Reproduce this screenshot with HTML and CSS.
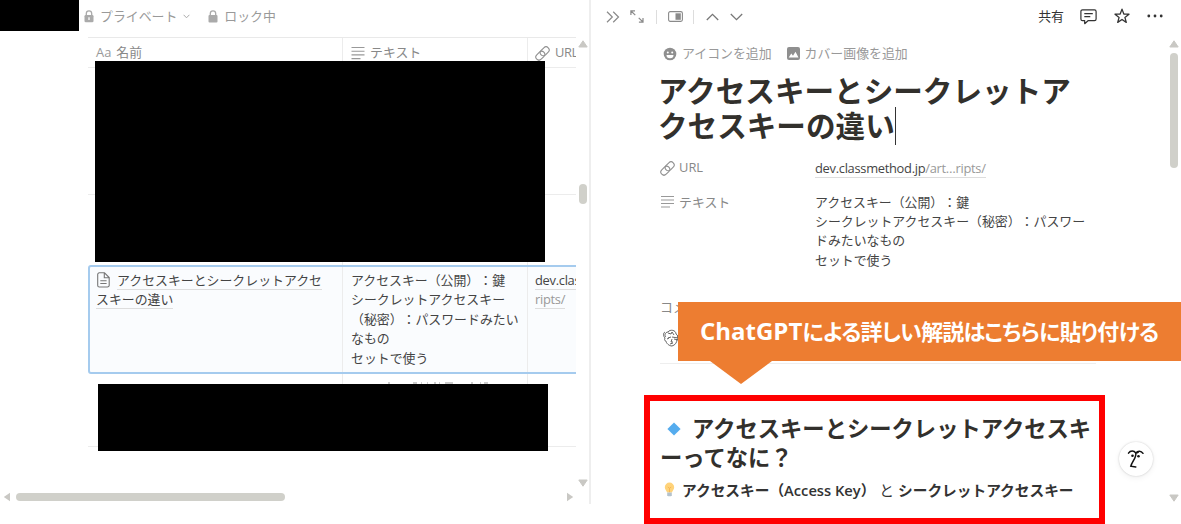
FILE: index.html
```html
<!DOCTYPE html>
<html lang="ja">
<head>
  <meta charset="utf-8">
  <title>アクセスキーとシークレットアクセスキーの違い</title>
  <link rel="stylesheet" href="styles.css">
</head>
<body>
  <div class="app">

    <!-- Left: database table -->
    <div class="database">
      <div class="db-bar">
        <svg width="10" height="13" viewBox="0 0 10 13"><path d="M2.3 6V3.6a2.7 2.7 0 0 1 5.4 0V6" fill="none" stroke="#aaa" stroke-width="1.3"/><rect x="0.5" y="5" width="9" height="7.3" rx="1.3" fill="#aaa"/><path d="M5 7.3v2.6" stroke="#fff" stroke-width="1.3"/></svg>
        <span class="db-private">プライベート</span>
        <svg class="chevron" width="7" height="5" viewBox="0 0 7 5"><path d="M.6.8 3.5 3.8 6.4.8" fill="none" stroke="#aaa"/></svg>
        <svg class="lock" width="10" height="13" viewBox="0 0 10 13"><path d="M2.3 6V3.6a2.7 2.7 0 0 1 5.4 0V6" fill="none" stroke="#aaa" stroke-width="1.3"/><rect x="0.5" y="5" width="9" height="7.5" rx="1" fill="#aaa"/></svg>
        <span>ロック中</span>
      </div>

      <div class="table">
        <div class="row head">
          <div class="cell name"><span class="aa">Aa</span>名前</div>
          <div class="cell text">
            <svg width="14" height="14" viewBox="0 0 14 14"><path d="M.5 1.5h13M.5 5.2h13M.5 8.9h13M.5 12.6h9" stroke="#999" stroke-width="1.1"/></svg>テキスト
          </div>
          <div class="cell url">
            <svg width="15" height="15" viewBox="0 0 15 15"><g fill="none" stroke="#8f8f8f" stroke-width="1.1" transform="rotate(-45 7.5 7.5)"><rect x="-.6" y="4.4" width="10" height="6.2" rx="3.1"/><rect x="5.6" y="4.4" width="10" height="6.2" rx="3.1"/></g></svg>URL
          </div>
        </div>
        <div class="row first"><div class="cell name"></div><div class="cell text"></div><div class="cell url"></div></div>
        <div class="row second"><div class="cell name"></div><div class="cell text"></div><div class="cell url"></div></div>
        <div class="row selected">
          <div class="cell name">
            <svg class="page-icon" width="13" height="16" viewBox="0 0 13 16"><path d="M2.3.8h5.2l4.7 4.7v7.7a1.8 1.8 0 0 1-1.8 1.8H2.3A1.6 1.6 0 0 1 .7 13.4V2.4A1.6 1.6 0 0 1 2.3.8ZM7.3 1v4.7H12M3.3 8.7h6.3M3.3 11.5h6.3" fill="none" stroke="#777" stroke-width="1.1"/></svg><span class="page-link">アクセスキーとシークレットアクセスキーの違い</span>
          </div>
          <div class="cell text">アクセスキー（公開）：鍵<br>シークレットアクセスキー（秘密）：パスワードみたいなもの<br>セットで使う</div>
          <div class="cell url"><span class="link">dev.classmethod.jp</span><br><span class="link muted">ripts/</span></div>
        </div>
        <div class="row last">
          <div class="cell name"></div>
          <div class="cell text"><svg width="130" height="2" viewBox="0 0 130 2"><path d="M37 1h2M62 1h4M70 1h1M76 1h1M83 1h2M88 1h1M94 1h8M120 1h2M129 1h1M133 1h4" stroke="#999"/></svg></div>
          <div class="cell url"></div>
        </div>
      </div>

      <div class="redact corner"></div>
      <div class="redact upper"></div>
      <div class="redact lower"></div>

      <div class="vscroll">
        <svg width="10" height="8" viewBox="0 0 10 8"><path d="M5 .8 9.2 7H.8Z" fill="#c9c8c4" stroke="#c9c8c4" stroke-linejoin="round"/></svg>
        <div class="vthumb"></div>
        <svg width="10" height="8" viewBox="0 0 10 8"><path d="M5 7.2.8 1h8.4Z" fill="#c9c8c4" stroke="#c9c8c4" stroke-linejoin="round"/></svg>
      </div>
      <div class="hscroll">
        <svg width="8" height="10" viewBox="0 0 8 10"><path d="M.8 5 7 .8v8.4Z" fill="#c9c8c4"/></svg>
        <div class="hthumb"></div>
        <svg width="8" height="10" viewBox="0 0 8 10"><path d="M7.2 5 1 .8v8.4Z" fill="#c9c8c4"/></svg>
      </div>
    </div>

    <!-- Right: page peek -->
    <div class="peek">
      <div class="topbar">
        <div class="nav">
          <svg width="14" height="12" viewBox="0 0 14 12"><path d="m1 .8 5.3 5.2L1 11.2M7.2.8l5.3 5.2-5.3 5.2" fill="none" stroke="#8a8a8a" stroke-width="1.2"/></svg>
          <svg class="expand" width="14" height="13" viewBox="0 0 14 13"><path d="M.9 5V.9H5M1 1l4.3 4.1M13 8v4.1H8.9M13 12 8.7 7.9" fill="none" stroke="#8a8a8a" stroke-width="1.2"/></svg>
          <i class="sep"></i>
          <svg width="15" height="11" viewBox="0 0 15 11"><rect x=".6" y=".6" width="13.8" height="9.8" rx="1.6" fill="none" stroke="#8a8a8a" stroke-width="1.1"/><rect x="7.5" y="2.3" width="5.3" height="6.5" fill="#8a8a8a"/></svg>
          <i class="sep"></i>
          <svg width="13" height="8" viewBox="0 0 13 8"><path d="m.8 7 5.7-5.7L12.2 7" fill="none" stroke="#777" stroke-width="1.3"/></svg>
          <svg class="down" width="13" height="8" viewBox="0 0 13 8"><path d="m.8 1 5.7 5.7L12.2 1" fill="none" stroke="#777" stroke-width="1.3"/></svg>
        </div>
        <div class="actions">
          <span>共有</span>
          <svg class="comment" width="17" height="16" viewBox="0 0 17 16"><path d="M2.5.8h12a1.6 1.6 0 0 1 1.6 1.6v7.7a1.6 1.6 0 0 1-1.6 1.6H8L4.7 14.7v-3H2.5A1.6 1.6 0 0 1 .9 10.1V2.4A1.6 1.6 0 0 1 2.5.8ZM4.3 4.7h8.5M4.3 7.7h6" fill="none" stroke="#333" stroke-width="1.2" stroke-linejoin="round"/></svg>
          <svg class="star" width="16" height="16" viewBox="0 0 16 16"><path d="m8 1.1 1.8 4.9 5.2.2-4.1 3.2 1.4 5L8 11.5l-4.3 2.900 1.4-5L1 6.2l5.2-.2Z" fill="none" stroke="#333" stroke-width="1.3" stroke-linejoin="round"/></svg>
          <svg width="16" height="4" viewBox="0 0 16 4"><circle cx="1.8" cy="2" r="1.4" fill="#333"/><circle cx="8" cy="2" r="1.4" fill="#333"/><circle cx="14.2" cy="2" r="1.4" fill="#333"/></svg>
        </div>
      </div>

      <div class="page">
        <div class="controls">
          <svg width="14" height="14" viewBox="0 0 14 14"><circle cx="7" cy="7" r="6.3" fill="#8f8f8f"/><circle cx="4.8" cy="5.4" r="1" fill="#fff"/><circle cx="9.2" cy="5.4" r="1" fill="#fff"/><path d="M3.5 8h7a3.5 3.2 0 0 1-7 0Z" fill="#fff"/></svg>
          <span>アイコンを追加</span>
          <svg class="cover" width="13" height="13" viewBox="0 0 13 13"><rect width="13" height="13" rx="2" fill="#8f8f8f"/><path d="m1.7 10.5 2.6-4 1.7 2.2 2.5-4 3 5.8Z" fill="#fff"/></svg>
          <span>カバー画像を追加</span>
        </div>
        <h1>アクセスキーとシークレットアクセスキーの違い<i class="caret"></i></h1>

        <div class="prop">
          <div class="label"><svg width="15" height="15" viewBox="0 0 15 15"><g fill="none" stroke="#8f8f8f" stroke-width="1.1" transform="rotate(-45 7.5 7.5)"><rect x="-.6" y="4.4" width="10" height="6.2" rx="3.1"/><rect x="5.6" y="4.4" width="10" height="6.2" rx="3.1"/></g></svg>URL</div>
          <div class="value"><span class="link">dev.classmethod.jp<span class="muted">/art…ripts/</span></span></div>
        </div>
        <div class="prop">
          <div class="label"><svg width="15" height="14" viewBox="0 0 15 14"><path d="M1 1.5h13M1 5h13M1 8.5h13M1 12h9" stroke="#999" stroke-width="1.1"/></svg>テキスト</div>
          <div class="value">アクセスキー（公開）：鍵<br>シークレットアクセスキー（秘密）：パスワードみたいなもの<br>セットで使う</div>
        </div>

        <div class="comments">
          <div class="comments-title">コメント</div>
          <svg width="20" height="20" viewBox="0 0 20 20"><path d="M4 9C2 8 3 4 6 4c2-3 8-2 8 2 2 1 2 3 1 4M3 4C1 5 1 8 3 10c-1 2 0 3 1 3 0 2 3 5 6 5 3-1 5-3 5-7M6 5l3 1 1-2 2 3M6 10l3-1M10 9l6 1v2l-4-1M5 11l2-1M10 11l-1 3h2M8 16l3-1" fill="none" stroke="#555" stroke-width=".9"/></svg>
        </div>

        <h2><svg class="diamond" width="14" height="14" viewBox="0 0 14 14"><path d="M7 .4 13.6 7 7 13.6.4 7Z" fill="#55acee"/></svg>アクセスキーとシークレットアクセスキーってなに？</h2>
        <p><svg class="bulb" width="11" height="15" viewBox="0 0 11 15"><path d="M5.5.5A4.7 4.7 0 0 0 .8 5.2c0 2.3 1.8 3.500 2.2 5.300h5c.4-1.800 2.200-3 2.200-5.300A4.700 4.700 0 0 0 5.500.5Z" fill="#ffd37a"/><path d="m3.800 5 1.700 1.300L7.200 5M5.500 6.300v4" fill="none" stroke="#f5b04c" stroke-width=".8"/><path d="M3.200 10.500h4.600v2.700l-1 1H4.200l-1-1Z" fill="#b4c2cc"/></svg><b>アクセスキー（Access Key）</b><span class="and">と</span><b>シークレットアクセスキー</b></p>
      </div>

      <div class="vscroll peek-scroll">
        <svg width="10" height="8" viewBox="0 0 10 8"><path d="M5 .8 9.2 7H.8Z" fill="#c9c8c4" stroke="#c9c8c4" stroke-linejoin="round"/></svg>
        <div class="vthumb"></div>
        <svg width="10" height="8" viewBox="0 0 10 8"><path d="M5 7.2.8 1h8.4Z" fill="#c9c8c4" stroke="#c9c8c4" stroke-linejoin="round"/></svg>
      </div>
      <div class="ai-button">
        <svg width="20" height="20" viewBox="0 0 20 20"><path d="M2.5 4.2C4.5 1.2 8 1.500 9.800 4c2-2.500 5.300-2.500 7.200.3M9.800 4.300c.8 4-3.600 8-5 12.900l5 .7M9.800 4.300l2.400-1" fill="none" stroke="#111" stroke-width="1.500" stroke-linecap="round"/><circle cx="6.500" cy="6.700" r="1.300" fill="#111"/><circle cx="12.500" cy="7.200" r="1.300" fill="#111"/></svg>
      </div>
    </div>

    <!-- Annotations -->
    <div class="callout"><span class="latin">ChatGPT</span>による詳しい解説はこちらに貼り付ける</div>
    <div class="highlight"></div>
  </div>
</body>
</html>
```

FILE: styles.css
```css
* {
  box-sizing: border-box;
}

body {
  margin: 0;
  background: #fff;
  color: #444;
  font-family: "Open Sans", "Noto Sans CJK JP", sans-serif;
  font-size: 12.9px;
  line-height: 19.3px;
  text-spacing-trim: space-all;
}

svg {
  display: block;
  flex: none;
}

.app {
  position: relative;
  display: flex;
  width: 1181px;
  height: 524px;
  overflow: hidden;
}

/* database */
.database {
  position: relative;
  width: 591px;
  height: 504px;
  border-right: 2px solid #eee;
  overflow: hidden;
}

.db-bar {
  display: flex;
  align-items: center;
  height: 37px;
  padding: 0 0 4px 84px;
  color: #999;
}

.db-private {
  margin-left: 6px;
}

.chevron {
  margin-left: 6px;
}

.lock {
  margin: 0 6px 0 18px;
}

.table {
  width: 488px;
  margin-left: 88px;
  border-top: 1px solid #e9e9e9;
  overflow: hidden;
}

.row {
  display: flex;
  width: 560px;
  border-bottom: 1px solid #ececec;
}

.cell {
  flex: none;
  padding: 6px 8px;
  border-right: 1px solid #ececec;
}

.cell.name {
  width: 255px;
}

.cell.text {
  width: 185px;
  padding-left: 8px;
}

.cell.url {
  width: 120px;
  padding-left: 7px;
}

.head {
  height: 30px;
  color: #888;
}

.head .cell {
  display: flex;
  align-items: center;
  gap: 5px;
  padding-top: 7px;
}

.head .url {
  letter-spacing: -0.4px;
}

.head .aa {
  color: #999;
}

.first {
  height: 127px;
}

.second {
  height: 70px;
  border-bottom: 0;
}

.selected {
  width: 560px;
  height: 109px;
  border: 2px solid #a5cbee;
  border-radius: 3px;
  background: #fafcfe;
  line-height: 19.4px;
}

.selected .cell {
  padding-top: 4px;
}

.selected .name {
  width: 253px;
  padding-left: 6px;
}

.page-icon {
  display: inline-block;
  margin: 0 7px 0 1px;
  vertical-align: -3px;
}

.page-link,
.link {
  border-bottom: 1px solid #ddd;
}

.link {
  color: #444;
  letter-spacing: -0.3px;
}

.muted {
  color: #999;
}

.last {
  height: 73px;
}

.last .cell.text svg {
  overflow: visible;
  margin-top: 2px;
}

.redact {
  position: absolute;
  background: #000;
}

.corner {
  left: 0;
  top: 0;
  width: 79px;
  height: 31px;
}

.upper {
  left: 95px;
  top: 61px;
  width: 450px;
  height: 201px;
}

.lower {
  left: 98px;
  top: 384px;
  width: 450px;
  height: 67px;
}

.vscroll {
  position: absolute;
  top: 40px;
  right: 1px;
  display: flex;
  flex-direction: column;
  align-items: center;
  width: 10px;
  height: 448px;
}

.vthumb {
  width: 8px;
  height: 20px;
  margin: 136px 0 275px;
  border-radius: 4px;
  background: #d0d0ca;
}

.hscroll {
  position: absolute;
  left: 3px;
  bottom: 2px;
  display: flex;
  align-items: center;
  width: 571px;
  height: 10px;
}

.hthumb {
  width: 269px;
  height: 8px;
  margin: 0 auto 0 5px;
  border-radius: 4px;
  background: #d0d0ca;
}

/* page peek */
.peek {
  position: relative;
  flex: 1;
  height: 524px;
}

.topbar {
  display: flex;
  align-items: center;
  justify-content: space-between;
  height: 33px;
  padding: 0 18px 0 15px;
}

.nav {
  display: flex;
  align-items: center;
}

.expand {
  margin: 0 12px 0 10px;
}

.sep {
  width: 1px;
  height: 14px;
  margin-right: 11px;
  background: #ddd;
}

.sep + svg + .sep {
  margin: 0 12px 0 10px;
}

.down {
  margin-left: 11px;
}

.actions {
  display: flex;
  align-items: center;
  color: #333;
}

.comment {
  margin: 1px 17px 0 16px;
}

.star {
  margin-right: 17px;
}

.page {
  width: 436px;
  margin-left: 69px;
}

.controls {
  display: flex;
  align-items: center;
  height: 40px;
  padding: 1px 0 0 3px;
  color: #999;
}

.controls span {
  margin-left: 5px;
}

.controls .cover {
  margin-left: 15px;
}

h1 {
  margin: 0 0 23px -2px;
  color: #32302c;
  font-size: 29.6px;
  font-weight: 700;
  line-height: 35.3px;
}

.caret {
  display: inline-block;
  width: 1px;
  height: 38px;
  margin: -10px 0;
  background: #333;
  vertical-align: 2px;
}

.prop {
  display: flex;
  min-height: 19px;
  margin-top: -8px;
  margin-bottom: 23px;
}

.prop + .prop {
  margin-top: -8px;
}

.label {
  display: flex;
  align-items: center;
  gap: 4px;
  width: 155px;
  height: 19px;
  color: #888;
}

.value {
  width: 281px;
}

.comments {
  height: 66px;
  margin-top: 28px;
  border-bottom: 1px solid #eee;
  color: #888;
}

.comments svg {
  margin: 11px 0 0 2px;
}

h2 {
  margin: 50px 0 7px;
  color: #32302c;
  font-size: 22.3px;
  font-weight: 700;
  line-height: 29.3px;
}

.diamond {
  display: inline-block;
  margin: 0 11px 0 7px;
  vertical-align: 1px;
}

p {
  display: flex;
  align-items: center;
  margin: 0;
  color: #333;
  font-size: 14.7px;
  line-height: 20px;
  white-space: nowrap;
}

p b {
  font-weight: 600;
}

.bulb {
  margin: 0 7px 0 4px;
}

.and {
  margin: 0 4px;
}

.peek-scroll {
  right: 2px;
  height: 462px;
}

.peek-scroll .vthumb {
  height: 115px;
  margin: 5px 0 326px;
}

.ai-button {
  position: absolute;
  right: 28px;
  top: 442px;
  display: flex;
  align-items: center;
  justify-content: center;
  width: 34px;
  height: 34px;
  border-radius: 50%;
  background: #fff;
  box-shadow: 0 0 2px rgba(0, 0, 0, 0.2), 0 2px 6px rgba(0, 0, 0, 0.06);
}

/* annotations */
.callout {
  position: absolute;
  left: 678px;
  top: 302px;
  width: 503px;
  height: 59px;
  padding-left: 22px;
  background: #ed7d31;
  color: #fff;
  font-size: 22px;
  font-weight: 700;
  font-feature-settings: "palt";
  letter-spacing: -0.8px;
  line-height: 58px;
  white-space: nowrap;
}

.latin {
  font-size: 24px;
  letter-spacing: 0;
}

.callout::after {
  content: "";
  position: absolute;
  left: 32px;
  top: 59px;
  border: solid transparent;
  border-width: 23px 31px 0;
  border-top-color: #ed7d31;
}

.highlight {
  position: absolute;
  left: 644px;
  top: 395px;
  width: 461px;
  height: 129px;
  border: 6px solid #f00;
}
```
